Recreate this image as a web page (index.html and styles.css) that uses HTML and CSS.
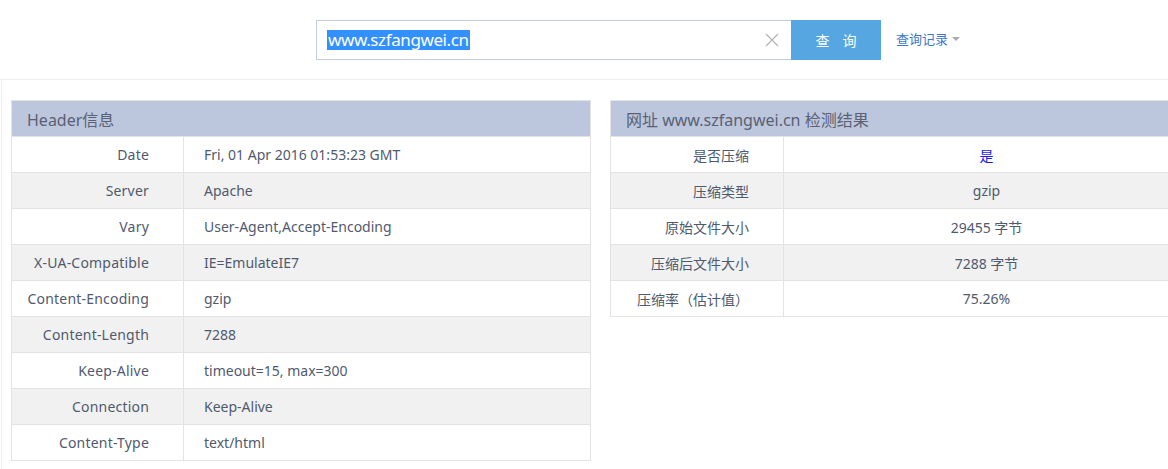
FILE: index.html
```html
<!DOCTYPE html>
<html lang="zh-CN">
<head>
<meta charset="utf-8">
<title>Header信息</title>
<link rel="stylesheet" href="styles.css">
</head>
<body>
<div class="top">
  <div class="search">
    <div class="input">
      <span class="sel">www.szfangwei.cn</span>
      <svg class="clear" width="14" height="14" viewBox="0 0 14 14"><path d="M1 1L13 13M13 1L1 13" stroke="#b4b4b4" stroke-width="1.2" fill="none"/></svg>
    </div>
    <button class="btn"><span>查</span><span>询</span></button>
    <a class="history">查询记录<span class="caret"></span></a>
  </div>
</div>
<div class="main">
  <table class="tbl left">
    <tr><th colspan="2">Header信息</th></tr>
    <tr><td class="k">Date</td><td class="v">Fri, 01 Apr 2016 01:53:23 GMT</td></tr>
    <tr class="alt"><td class="k">Server</td><td class="v">Apache</td></tr>
    <tr><td class="k">Vary</td><td class="v">User-Agent,Accept-Encoding</td></tr>
    <tr class="alt"><td class="k">X-UA-Compatible</td><td class="v">IE=EmulateIE7</td></tr>
    <tr><td class="k">Content-Encoding</td><td class="v">gzip</td></tr>
    <tr class="alt"><td class="k">Content-Length</td><td class="v">7288</td></tr>
    <tr><td class="k">Keep-Alive</td><td class="v">timeout=15, max=300</td></tr>
    <tr class="alt"><td class="k">Connection</td><td class="v">Keep-Alive</td></tr>
    <tr><td class="k">Content-Type</td><td class="v">text/html</td></tr>
  </table>
  <table class="tbl right">
    <tr><th colspan="2">网址 www.szfangwei.cn 检测结果</th></tr>
    <tr><td class="k2">是否压缩</td><td class="c"><span class="yes">是</span></td></tr>
    <tr class="alt"><td class="k2">压缩类型</td><td class="c">gzip</td></tr>
    <tr><td class="k2">原始文件大小</td><td class="c">29455 字节</td></tr>
    <tr class="alt"><td class="k2">压缩后文件大小</td><td class="c">7288 字节</td></tr>
    <tr><td class="k2">压缩率（估计值）</td><td class="c">75.26%</td></tr>
  </table>
</div>
</body>
</html>
```
FILE: styles.css
```css
html, body {
  margin: 0;
  padding: 0;
  background: #fff;
  font-family: "Noto Sans", "Noto Sans CJK SC", sans-serif;
  color: #505a6e;
  overflow: hidden;
  height: 469px;
}
.top {
  height: 80px;
  border-bottom: 1px solid #eeeeee;
  box-sizing: border-box;
  padding-top: 20px;
}
.search {
  display: flex;
  align-items: center;
  padding-left: 316px;
}
.input {
  width: 475px;
  height: 40px;
  box-sizing: border-box;
  border: 1px solid #c3cbdf;
  border-right: none;
  display: flex;
  align-items: center;
  padding-left: 10px;
  padding-right: 12px;
}
.sel {
  background: #3390ff;
  color: #fff;
  font-family: "Noto Sans", sans-serif;
  font-size: 17px;
  line-height: 20px;
  height: 20px;
  padding: 0 1px;
  letter-spacing: -0.4px;
}
.clear {
  margin-left: auto;
}
.btn {
  width: 90px;
  height: 40px;
  border: none;
  background: #56a6e1;
  color: #fff;
  font-family: "Noto Sans CJK SC", sans-serif;
  font-size: 14px;
  padding: 0;
  margin: 0;
  display: flex;
  align-items: center;
  justify-content: center;
  gap: 13px;
}
.history {
  margin-left: 15px;
  color: #3b78cc;
  font-family: "Noto Sans CJK SC", sans-serif;
  font-size: 13px;
  display: flex;
  align-items: center;
  margin-top: -3px;
}
.caret {
  display: inline-block;
  width: 0;
  height: 0;
  border-left: 4px solid transparent;
  border-right: 4px solid transparent;
  border-top: 4px solid #aaaaaa;
  margin-left: 4px;
}
.main {
  margin-left: 1px;
  border-left: 1px solid #efefef;
  padding: 20px 0 0 9px;
  display: flex;
  gap: 19px;
  align-items: flex-start;
  height: 389px;
  box-sizing: border-box;
}
.tbl {
  border-collapse: collapse;
  width: 580px;
  flex: none;
  font-size: 14px;
}
.tbl th {
  background: #bcc7de;
  height: 36px;
  box-sizing: border-box;
  text-align: left;
  font-weight: normal;
  font-size: 16px;
  color: #5a6174;
  padding: 0 0 0 15px;
  border: 1px solid #e3e3e3;
}
.tbl td {
  height: 36px;
  box-sizing: border-box;
  border: 1px solid #e3e3e3;
  padding: 0;
}
.tbl tr.alt td {
  background: #f1f1f1;
}
.k {
  width: 172px;
  text-align: right;
  padding-right: 34px !important;
  letter-spacing: 0.2px;
}
.v {
  padding-left: 20px !important;
}
.k2 {
  width: 173px;
  text-align: right;
  padding-right: 34px !important;
}
.c {
  text-align: center;
}
.yes {
  color: #1a1aee;
}
```
